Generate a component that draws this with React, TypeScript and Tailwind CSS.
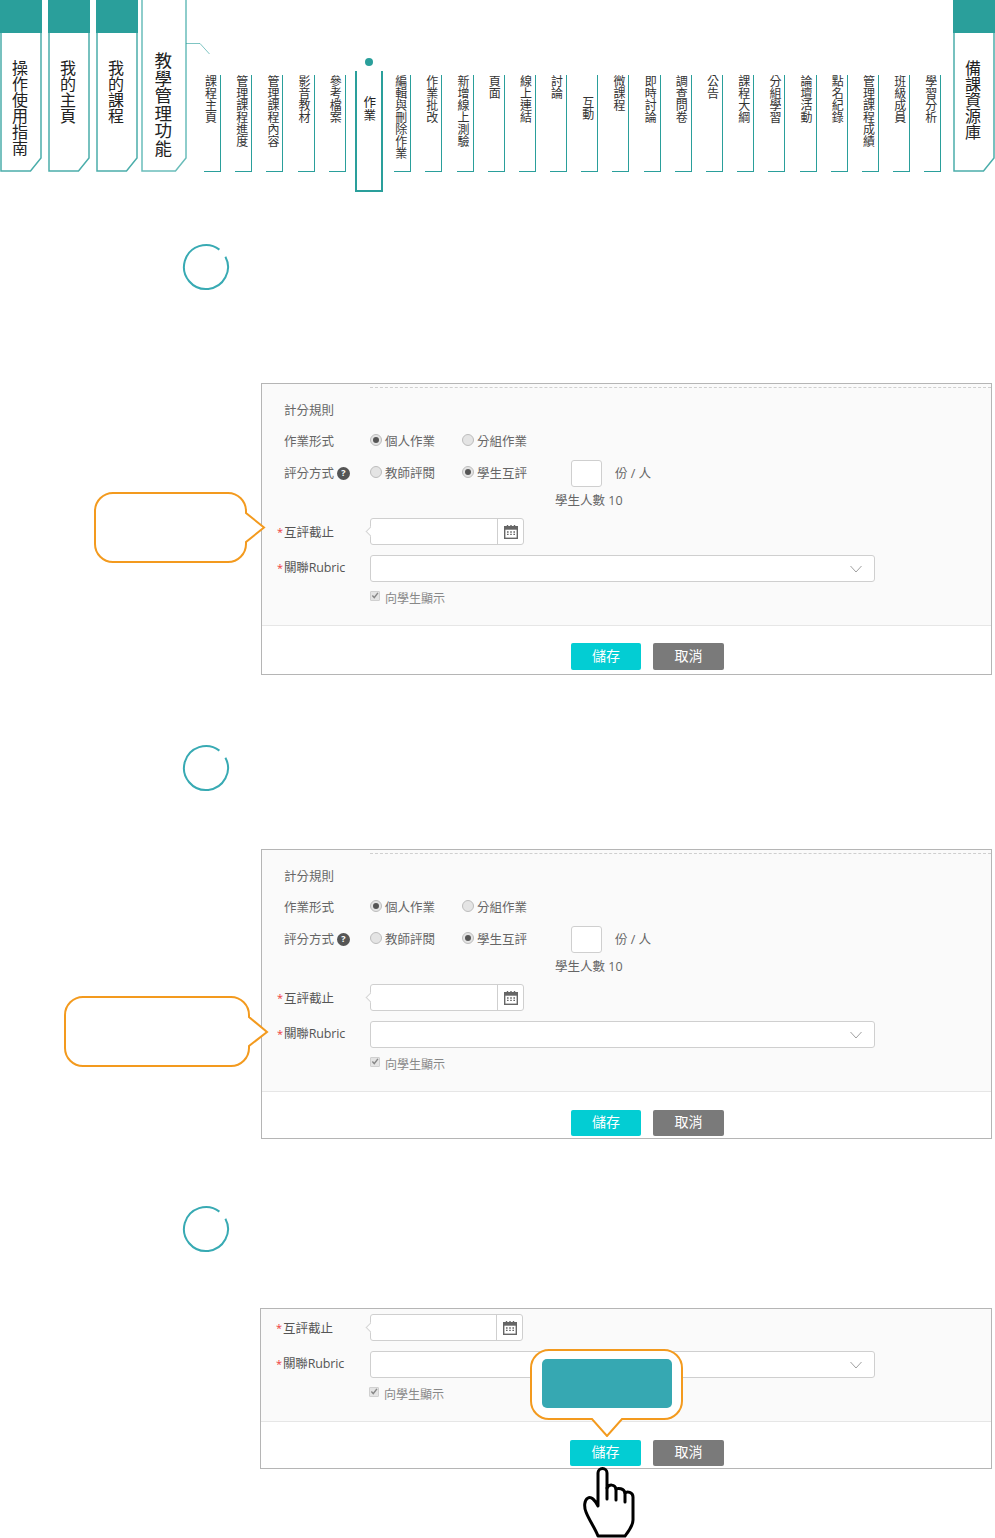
const TEAL = '#2a9f9b';

const subTabsLeft = ['課程主頁', '管理課程進度', '管理課程內容', '影音教材', '參考檔案'];
const subTabsRight = [
  '編輯與刪除作業',
  '作業批改',
  '新增線上測驗',
  '頁面',
  '線上連結',
  '討論',
  '互動',
  '微課程',
  '即時討論',
  '調查問卷',
  '公告',
  '課程大綱',
  '分組學習',
  '論壇活動',
  '點名紀錄',
  '管理課程成績',
  '班級成員',
  '學習分析',
];

const cjk = "font-['Noto_Sans_CJK_TC','Liberation_Sans',sans-serif]";
const formFont = "font-['Open_Sans','Noto_Sans_CJK_TC',sans-serif]";

function MainTab({ label, className }: { label: string; className: string }) {
  return (
    <div className={`relative h-[172px] w-[42px] shrink-0 ${className}`}>
      <svg className="absolute inset-0" width="42" height="172" viewBox="0 0 42 172" fill="none">
        <path d="M1 0V171H30.5L41 158V0" stroke={TEAL} strokeOpacity="0.85" strokeWidth="1.5" />
      </svg>
      <div className="relative h-[33px] bg-[#2a9f9b]" />
      <div className="relative flex justify-center pt-[27px] pr-[2px]">
        <span className="text-[16px] leading-[16px] text-[#222] [writing-mode:vertical-rl]">{label}</span>
      </div>
    </div>
  );
}

function SubTab({ label, offset }: { label: string; offset?: boolean }) {
  return (
    <div
      className={`mt-[75px] flex h-[97px] w-[17px] shrink-0 justify-center border-r border-b border-[#2a9f9b] pr-[3px] ${offset ? 'pt-[21px]' : ''}`}
    >
      <span className="text-[12px] leading-[12px] text-[#333] [writing-mode:vertical-rl]">{label}</span>
    </div>
  );
}

function Nav() {
  return (
    <div className={`flex h-[192px] items-start ${cjk}`}>
      <MainTab label="操作使用指南" className="" />
      <MainTab label="我的主頁" className="ml-[6px]" />
      <MainTab label="我的課程" className="ml-[6px]" />
      {/* open group */}
      <div className="relative ml-[3px] h-[172px] w-[46px] shrink-0">
        <svg className="absolute top-0 left-0" width="70" height="172" viewBox="0 0 70 172" fill="none">
          <path d="M1 0V171H34.5L45 158V0" stroke={TEAL} strokeOpacity="0.7" strokeWidth="1.5" />
          <path d="M45 43.5H59L68.5 54" stroke={TEAL} strokeOpacity="0.6" strokeWidth="1" />
        </svg>
        <div className="relative flex justify-center pt-[52px] pr-[2px]">
          <span className="text-[17.5px] leading-[17.5px] text-[#222] [writing-mode:vertical-rl]">教學管理功能</span>
        </div>
      </div>
      <div className="ml-[17px] flex items-start gap-[14.2px]">
        {subTabsLeft.map((t) => (
          <SubTab key={t} label={t} />
        ))}
        <div className="relative -mr-[3px] -ml-[5px] mt-[71px] flex h-[121px] w-[28px] shrink-0 justify-center border-x-2 border-b-2 border-[#2a9f9b] pt-[25px]">
          <span className="absolute -top-[13px] left-[8px] h-2 w-2 rounded-full bg-[#2a9f9b]" />
          <span className="text-[12.5px] leading-[12.5px] text-[#222] [writing-mode:vertical-rl]">作業</span>
        </div>
        {subTabsRight.map((t) => (
          <SubTab key={t} label={t} offset={t === '互動'} />
        ))}
      </div>
      <MainTab label="備課資源庫" className="ml-auto" />
    </div>
  );
}

function StepCircle({ className }: { className: string }) {
  return (
    <svg className={`block ${className}`} width="48" height="48" viewBox="0 0 48 48" fill="none">
      <path d="M43.4 13.7A22 22 0 1 1 37.4 6.6" stroke="#38aab3" strokeWidth="2" />
    </svg>
  );
}

function Radio({ checked, label }: { checked?: boolean; label: string }) {
  return (
    <label className="flex w-[92px] items-center gap-[3px]">
      <span className="-mt-[2px] flex h-3 w-3 items-center justify-center rounded-full border border-[#bdbdbd] bg-[#e4e4e4]">
        {checked && <span className="h-[6px] w-[6px] rounded-full bg-[#555]" />}
      </span>
      <span className="pt-[2px]">{label}</span>
    </label>
  );
}

function Star() {
  return <span className="w-[7px] text-[11px] leading-[11px] text-[#ef3b3b]">*</span>;
}

function Deadline({ wide }: { wide?: boolean }) {
  return (
    <div className="flex h-[27px] items-center">
      <div className={`flex items-center pl-[15px] text-[#555] ${wide ? 'w-[109px]' : 'w-[108px]'}`}>
        <Star />
        <span className="pt-[2px]">互評截止</span>
      </div>
      <div className={`relative flex h-[27px] rounded-[3px] border border-[#cfcfcf] bg-white ${wide ? 'w-[153px]' : 'w-[154px]'}`}>
        <span className="absolute top-[9px] -left-[4px] h-[7px] w-[7px] rotate-45 border-b border-l border-[#d5d5d5] bg-white" />
        <div className="ml-auto flex w-[26px] items-center justify-center border-l border-[#cfcfcf]">
          <svg width="14" height="14" viewBox="0 0 14 14" fill="none">
            <path d="M3.5 0V3M7 0V3M10.5 0V3" stroke="#666" strokeWidth="1.4" />
            <rect x="0.7" y="1.7" width="12.6" height="11.6" stroke="#666" strokeWidth="1.4" />
            <rect x="0.7" y="1.7" width="12.6" height="3" fill="#666" />
            <path d="M3 7h1.6M6.2 7h1.6M9.4 7H11M3 9.4h1.6M6.2 9.4h1.6M9.4 9.4H11" stroke="#666" strokeWidth="1.3" />
          </svg>
        </div>
      </div>
    </div>
  );
}

function Rubric({ wide }: { wide?: boolean }) {
  return (
    <div className="mt-[10px] flex h-[27px] items-center">
      <div className={`-mt-[2px] flex items-center pl-[15px] text-[#555] ${wide ? 'w-[109px]' : 'w-[108px]'}`}>
        <Star />
        <span className="tracking-[-0.15px]">關聯Rubric</span>
      </div>
      <div className="flex h-[27px] w-[505px] items-center justify-end rounded-[3px] border border-[#cfcfcf] bg-white pr-[12px]">
        <svg width="12" height="8" viewBox="0 0 12 8" fill="none">
          <path d="M0.5 1L6 7L11.5 1" stroke="#a0a0a0" strokeWidth="1" />
        </svg>
      </div>
    </div>
  );
}

function ShowCheck() {
  return (
    <div className="flex h-[29px] items-center pl-[108px] text-[12px] text-[#888]">
      <span className="-mt-[2px] flex h-[10px] w-[10px] items-center justify-center rounded-[1px] border border-[#d0d0d0] bg-[#e4e4e4]">
        <svg width="9" height="9" viewBox="0 0 9 9" fill="none">
          <path d="M1.5 4.5L3.7 6.8L7.8 1.6" stroke="#888" strokeWidth="1.6" />
        </svg>
      </span>
      <span className="ml-[5px] pt-[5px]">向學生顯示</span>
    </div>
  );
}

function Footer({ wide, tight }: { wide?: boolean; tight?: boolean }) {
  return (
    <div className={`flex gap-[12px] pl-[309px] ${tight ? 'pt-[18px] pb-[2px]' : 'pt-[17px] pb-[4px]'}`}>
      <button className={`rounded-[2px] bg-[#03cdd3] pb-[2px] text-sm text-white ${tight ? 'h-[26px]' : 'h-[27px]'} ${wide ? 'w-[71px]' : 'w-[70px]'}`}>
        儲存
      </button>
      <button className={`w-[71px] rounded-[2px] bg-[#7a7a7a] pb-[2px] text-sm text-white ${tight ? 'h-[26px]' : 'h-[27px]'}`}>
        取消
      </button>
    </div>
  );
}

function FullForm({ tight }: { tight?: boolean }) {
  return (
    <div className={`w-[731px] border border-[#b5b5b5] bg-white text-[12.5px] leading-[18px] ${formFont}`}>
      <div className="border-b border-[#e6e6e6] bg-[#fafafa] pt-[3px] pb-[14px]">
        <div className="ml-[108px] border-t border-dashed border-[#cfcfcf]" />
        <div className="flex h-[44px] items-center pt-[2px] pl-[22px] text-[#666]">計分規則</div>
        <div className="flex h-[18px] items-center text-[#666]">
          <div className="w-[108px] pt-[2px] pl-[22px]">作業形式</div>
          <Radio checked label="個人作業" />
          <Radio label="分組作業" />
        </div>
        <div className="mt-[9px] flex h-[28px] items-center text-[#666]">
          <div className="flex w-[108px] items-center gap-[3px] pl-[22px]">
            <span className="pt-[2px]">評分方式</span>
            <span className="flex h-[13px] w-[13px] items-center justify-center rounded-full bg-[#555] text-[9px] font-bold text-white">
              ?
            </span>
          </div>
          <Radio label="教師評閱" />
          <Radio checked label="學生互評" />
          <span className="ml-[17px] h-[27px] w-[31px] rounded-[3px] border border-[#cfcfcf] bg-white" />
          <span className="ml-[13px] pt-[2px]">份 / 人</span>
        </div>
        <div className="flex h-[26px] items-center pt-[2px] pl-[293px] text-[#666]">學生人數 10</div>
        <div className="mt-[5px]">
          <Deadline />
        </div>
        <div className="mt-[1px]">
          <Rubric />
        </div>
        <ShowCheck />
      </div>
      <Footer tight={tight} />
    </div>
  );
}

function Bubble1() {
  return (
    <svg className="absolute top-[109px] -left-[167px]" width="174" height="72" viewBox="0 0 174 72" fill="none">
      <path
        d="M19 1H134A18 18 0 0 1 152 19V21L170 35.5L152 50V52A18 18 0 0 1 134 70H19A18 18 0 0 1 1 52V19A18 18 0 0 1 19 1Z"
        fill="white"
        stroke="#f39a1e"
        strokeWidth="2"
      />
    </svg>
  );
}

function Bubble2() {
  return (
    <svg className="absolute top-[147px] -left-[197px]" width="206" height="72" viewBox="0 0 206 72" fill="none">
      <path
        d="M19 1H167A18 18 0 0 1 185 19V21L203 36L185 50V52A18 18 0 0 1 167 70H19A18 18 0 0 1 1 52V19A18 18 0 0 1 19 1Z"
        fill="white"
        stroke="#f39a1e"
        strokeWidth="2"
      />
    </svg>
  );
}

function Bubble3() {
  return (
    <div className="absolute top-[41px] left-[270px] h-[88px] w-[154px]">
      <svg className="absolute inset-0" width="154" height="88" viewBox="0 0 154 88" fill="none">
        <path
          d="M19 1H134A18 18 0 0 1 152 19V52A18 18 0 0 1 134 70H92L77 87L62 70H19A18 18 0 0 1 1 52V19A18 18 0 0 1 19 1Z"
          fill="white"
          stroke="#f39a1e"
          strokeWidth="2"
        />
      </svg>
      <div className="absolute top-[10px] left-[12px] h-[49px] w-[130px] rounded-[5px] bg-[#36a8b2]" />
    </div>
  );
}

function Hand() {
  return (
    <svg className="absolute top-[154px] left-[315px]" width="70" height="76" viewBox="0 0 70 76" fill="none">
      <path
        d="M23 44V11A4.5 4.5 0 0 1 32 11V26C34 22 40 22 41 27C43 26 49 26 50 31C52 29 58 30 58 35V58C58 64 53 70 50 74H23C20 66 14 58 11 50C9 45 9 38 13 36C16 34 20 38 23 44Z"
        fill="white"
        stroke="black"
        strokeWidth="3"
        strokeLinejoin="round"
      />
      <path d="M32 26V37M41 27V38M50 31V40" stroke="black" strokeWidth="3" strokeLinecap="round" />
    </svg>
  );
}

export default function App() {
  return (
    <div className="h-[1538px] w-[995px] overflow-hidden bg-white">
      <Nav />

      {/* step 1 */}
      <StepCircle className="mt-[51px] ml-[182px]" />
      <div className="relative mt-[92px] ml-[261px] w-[731px]">
        <FullForm />
        <Bubble1 />
      </div>

      {/* step 2 */}
      <StepCircle className="mt-[69px] ml-[182px]" />
      <div className="relative mt-[57px] ml-[261px] w-[731px]">
        <FullForm tight />
        <Bubble2 />
      </div>

      {/* step 3 */}
      <StepCircle className="mt-[66px] ml-[182px]" />
      <div className="relative mt-[55px] ml-[260px] w-[732px]">
        <div className={`border border-[#b5b5b5] bg-white text-[12.5px] leading-[18px] ${formFont}`}>
          <div className="border-b border-[#e6e6e6] bg-[#fafafa] pt-[5px] pb-[14px]">
            <Deadline wide />
            <Rubric wide />
            <ShowCheck />
          </div>
          <Footer wide tight />
        </div>
        <Bubble3 />
        <Hand />
      </div>
    </div>
  );
}
